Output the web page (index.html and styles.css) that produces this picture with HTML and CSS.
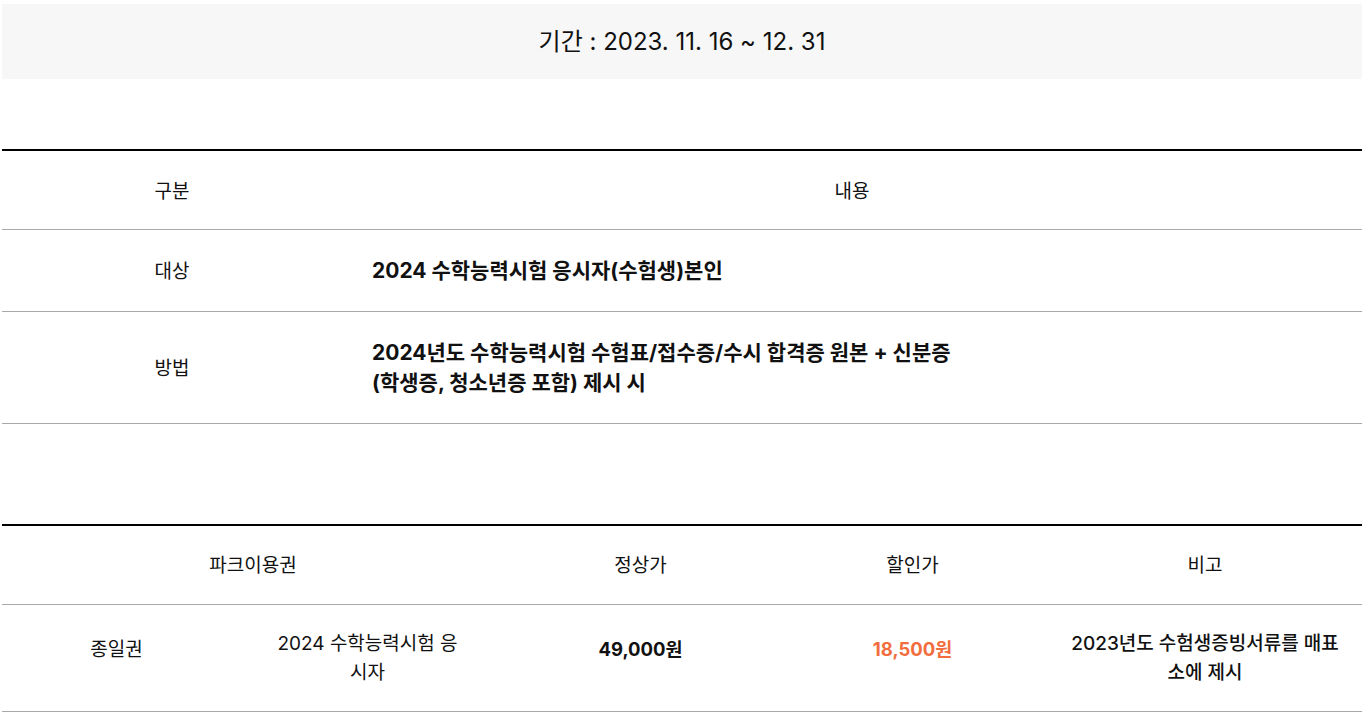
FILE: index.html
```html
<!DOCTYPE html>
<html lang="ko">
<head>
<meta charset="utf-8">
<title>수험생 할인</title>
<link rel="stylesheet" href="styles.css">
</head>
<body>
<div class="page">
  <div class="period">기간 : 2023. 11. 16 ~ 12. 31</div>

  <table class="info">
    <colgroup><col class="c-label"><col></colgroup>
    <thead>
      <tr><th>구분</th><th>내용</th></tr>
    </thead>
    <tbody>
      <tr><td class="label">대상</td><td class="content">2024 수학능력시험 응시자(수험생)본인</td></tr>
      <tr><td class="label">방법</td><td class="content">2024년도 수학능력시험 수험표/접수증/수시 합격증 원본 + 신분증<br>(학생증, 청소년증 포함) 제시 시</td></tr>
    </tbody>
  </table>

  <table class="price">
    <colgroup>
      <col class="p1"><col class="p2"><col class="p3"><col class="p4"><col class="p5">
    </colgroup>
    <thead>
      <tr><th colspan="2">파크이용권</th><th>정상가</th><th>할인가</th><th>비고</th></tr>
    </thead>
    <tbody>
      <tr>
        <td class="single">종일권</td>
        <td>2024 수학능력시험 응<br>시자</td>
        <td class="single strong">49,000원</td>
        <td class="single strong sale">18,500원</td>
        <td class="note">2023년도 수험생증빙서류를 매표<br>소에 제시</td>
      </tr>
    </tbody>
  </table>
</div>
</body>
</html>
```

FILE: styles.css
```css
* { box-sizing: border-box; }
html, body { margin: 0; padding: 0; background: #fff; }
body {
  font-family: Inter, "Noto Sans CJK KR", sans-serif;
  color: #111;
}
.page {
  margin: 4px 9px 0 2px;
}
.period {
  background: #f7f7f7;
  height: 75px;
  display: flex;
  align-items: center;
  justify-content: center;
  font-size: 24px;
  color: #111;
  padding-bottom: 4px;
}
table {
  width: 100%;
  border-collapse: collapse;
  table-layout: fixed;
}
.info {
  margin-top: 70px;
  border-top: 2px solid #000;
}
.c-label { width: 25%; }
.info th, .info td {
  border-bottom: 1px solid #aaa;
  vertical-align: middle;
}
.info th {
  font-weight: 400;
  font-size: 19px;
  line-height: 26px;
  padding: 28px 0 24px;
  text-align: center;
}
.info td {
  padding: 26px 0 25px;
}
.info td.label {
  font-size: 19px;
  line-height: 30px;
  text-align: center;
  padding-top: 27px;
  padding-bottom: 24px;
}
.info td.content {
  font-size: 21px;
  font-weight: 700;
  line-height: 30px;
  padding-left: 30px;
  text-align: left;
}
.price {
  margin-top: 100px;
  border-top: 2px solid #000;
}
.p1 { width: 229px; }
.p2 { width: 273px; }
.p3 { width: 273px; }
.p4 { width: 271px; }
.p5 { width: 314px; }
.price th, .price td {
  border-bottom: 1px solid #aaa;
  text-align: center;
}
.price th {
  font-weight: 400;
  font-size: 19px;
  line-height: 26px;
  padding: 27px 0 25px;
  vertical-align: middle;
}
.price td {
  font-size: 19px;
  line-height: 29px;
  padding: 24px 0 24px;
  vertical-align: top;
}
.price td.single { padding-top: 30px; }
.price td.strong { font-weight: 700; font-size: 18.5px; }
.price td.sale { color: #f26d3d; }
.price td.note { font-weight: 500; }
```
